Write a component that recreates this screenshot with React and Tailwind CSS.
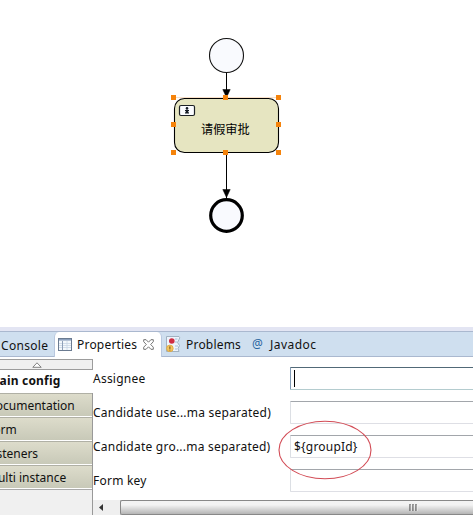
import React from "react";

const labels = [
  { text: "Assignee", value: "", focused: true },
  { text: "Candidate use...ma separated)", value: "" },
  { text: "Candidate gro...ma separated)", value: "${groupId}" },
  { text: "Form key", value: "" },
];

const sections = ["Documentation", "Form", "Listeners", "Multi instance"];

function Diagram() {
  return (
    <svg className="block h-[327px] w-[473px] shrink-0" viewBox="0 0 473 327">
      <circle cx="226.5" cy="55.5" r="17" fill="#f9fafe" stroke="#111" strokeWidth="1.1" />
      <path d="M226.5 73V98M226.5 153V198" stroke="#000" />
      <rect x="174.5" y="98.5" width="104" height="54" rx="10" fill="#e6e5c1" stroke="#000" strokeWidth="1.1" />
      <path d="M222.8 89.5h7.4l-3.7 8zM222.8 189.5h7.4l-3.7 8z" fill="#000" stroke="#000" strokeWidth=".5" />
      <circle cx="226.5" cy="215.5" r="15.8" fill="#f9fafe" stroke="#000" strokeWidth="3.2" />
      <rect x="179.5" y="105.5" width="15" height="10" rx="1.5" fill="#fbfcff" stroke="#1c2025" strokeWidth="1.2" />
      <path d="M185 110h4v1.2h-1v1h1v1.3h-4v-1.3h1v-1h-1z" fill="#151b25" />
      <circle cx="187" cy="108.4" r="1.3" fill="#151b25" />
      <path d="M174 97.5h104.5" stroke="#f3ad6a" strokeWidth=".6" opacity=".6" />
      <g fill="#f5830b">
        {[[171, 95], [223, 95], [276, 95], [171, 122], [276, 122], [171, 150], [223, 150], [276, 150]].map(([x, y]) => (
          <rect key={x + "-" + y} x={x} y={y} width="5" height="5" />
        ))}
      </g>
      <text x="201" y="134" fontSize="12.2" fill="#000" fontFamily="'Noto Sans CJK SC', sans-serif">请假审批</text>
    </svg>
  );
}

function TabBar() {
  return (
    <div className="flex h-[26px] shrink-0 items-stretch border-y border-[#aab8cf] bg-[#cfdfef] text-[12px] leading-[26px] whitespace-nowrap">
      <div className="w-[54px] shrink-0 pt-px pl-[1px] tracking-[0.3px]">Console</div>
      <div className="-mb-px flex w-[108px] shrink-0 items-center rounded-t-[5px] border-x border-[#b9c8df] bg-white pl-[3px]">
        <svg className="mr-[5px] h-[13px] w-[14px] shrink-0" viewBox="0 0 14 13">
          <rect x=".5" y=".5" width="13" height="12" fill="#f4f8fc" stroke="#6b7b91" />
          <path d="M1 1.8h12" stroke="#8ba0bd" strokeWidth="1.6" />
          <path d="M9 3v9M1 5.5h12M1 7.5h12M1 9.5h12" stroke="#c9d5e4" strokeWidth=".8" />
          <path d="M4.5 3v9" stroke="#8fa0b8" />
        </svg>
        <span className="w-[66px] pt-px tracking-[0.2px]">Properties</span>
        <svg className="h-[11px] w-[11px] shrink-0" viewBox="0 0 11 11">
          <path d="M.7.7h2.4l2.4 2.5L7.9.7h2.4v2L7.7 5.5l2.6 2.7v2.1H7.9L5.5 7.8l-2.4 2.5H.7V8.2l2.6-2.7L.7 2.7z" fill="#fff" stroke="#666" strokeWidth=".9" />
        </svg>
      </div>
      <div className="flex w-[90px] shrink-0 items-center pl-[4px]">
        <svg className="mr-[5px] h-[16px] w-[15px] shrink-0" viewBox="0 0 15 16">
          <path d="M.5 15.5V.5H13q1.5 1 0 3l-1.5 3 2 3-1.5 3 1 3z" fill="#edf4fc" stroke="#9aabbb" strokeWidth=".9" />
          <path d="M9 3h2.5M9 6h2M9 10h3M9 13h2" stroke="#a6bedb" />
          <circle cx="5.8" cy="5" r="2.8" fill="#d02d43" />
          <circle cx="3.9" cy="12.4" r="3.3" fill="#f4c65e" stroke="#dda43e" strokeWidth=".8" />
          <path d="M3.9 10.4v2.5M3.9 13.6v.9" stroke="#694715" strokeWidth="1" />
        </svg>
        <span className="pt-px tracking-[0.2px]">Problems</span>
      </div>
      <div className="flex items-center">
        <span className="w-[18px] text-[12px] text-[#28659f]">@</span>
        <span className="pt-px tracking-[0.45px]">Javadoc</span>
      </div>
    </div>
  );
}

export default function App() {
  return (
    <div className="relative flex h-[515px] w-[473px] flex-col overflow-hidden bg-white font-['Noto_Sans','Noto_Sans_CJK_SC',sans-serif] text-[12px] text-[#111]">
      <Diagram />
      <div className="h-[4px] shrink-0 bg-[#e3e5f3]" />
      <TabBar />
      <div className="flex min-h-0 flex-1">
        <nav className="flex w-[93px] shrink-0 flex-col pt-[2px] whitespace-nowrap">
          <div className="flex h-[11px] shrink-0 items-center justify-center border border-l-0 border-[#9c9c9c] bg-[#f0f0f0] pr-[18px]">
            <svg className="h-[6px] w-[10px]" viewBox="0 0 10 6"><path d="M.8 5.3 5 .8l4.2 4.5z" fill="#fff" stroke="#666" strokeWidth=".8" /></svg>
          </div>
          <div className="h-[23px] shrink-0 bg-white leading-[22px] font-bold"><span className="-ml-[12px] tracking-[0.2px]">Main config</span></div>
          <div className="flex flex-1 flex-col border-r border-[#999] bg-[#f0f0f0]">
            {sections.map((name) => (
              <div key={name} className="h-[24px] shrink-0 border-t border-b border-t-[#b0b0a5] border-b-white bg-linear-to-b from-[#dddccb] to-[#c8c9b8] leading-[23px]">
                <span className="-ml-[13px]">{name}</span>
              </div>
            ))}
            <div className="h-px bg-[#aaa]" />
          </div>
        </nav>
        <main className="flex min-w-0 flex-1 flex-col">
          <div className="flex flex-1 flex-col gap-[11px] pt-[10px]">
            {labels.map((f) => (
              <div key={f.text} className="flex h-[23px] shrink-0 items-center whitespace-nowrap">
                <span className="w-[197px] shrink-0 tracking-[0.23px]">{f.text}</span>
                <div className={"flex h-[23px] flex-1 items-center rounded-l-[1px] border border-r-0 pl-[3px] tracking-[0.2px] " + (f.focused ? "border-t-[#516977] border-b-[#b4cccf] border-l-[#829bb5]" : "border-t-[#a2a6ab] border-b-[#dedfe5] border-l-[#dcdfe4]")}>
                  {f.focused ? <div className="h-[17px] w-px bg-black" /> : f.value}
                </div>
              </div>
            ))}
          </div>
          <div className="flex h-[15px] shrink-0 bg-[#efefef]">
            <div className="flex w-[27px] items-center pl-[6px]">
              <svg className="h-[7px] w-[4px]" viewBox="0 0 4 7"><path d="M4 0v7L0 3.5z" fill="#333" /></svg>
            </div>
            <div className="flex flex-1 items-center rounded-l-[2px] border border-r-0 border-[#888] bg-linear-to-b from-[#f3f3f3] from-30% to-[#b5b5b5] pl-[288px]">
              <svg className="h-[7px] w-[9px]" viewBox="0 0 9 7"><path d="M1 0v7M4 0v7M7 0v7" stroke="#555" strokeWidth="1.2" /><path d="M2.2 1v6M5.2 1v6M8.2 1v6" stroke="#f4f4f4" strokeWidth=".7" /></svg>
            </div>
          </div>
        </main>
      </div>
      <svg className="pointer-events-none absolute top-[418px] left-[276px] h-[64px] w-[98px]" viewBox="0 0 98 64">
        <ellipse cx="49" cy="32" rx="46" ry="28.8" fill="none" stroke="#d24b55" strokeWidth="1.1" />
      </svg>
    </div>
  );
}
